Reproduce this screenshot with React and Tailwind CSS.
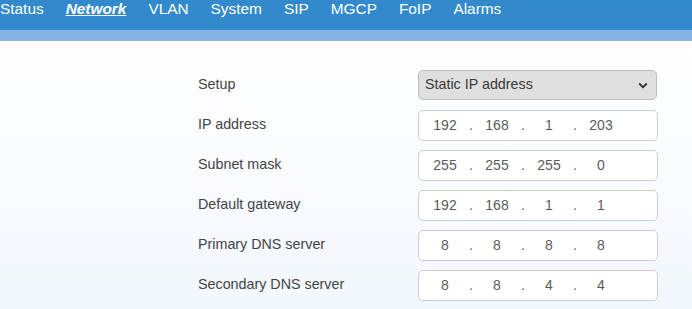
const tabs = ['Status', 'Network', 'VLAN', 'System', 'SIP', 'MGCP', 'FoIP', 'Alarms'];

const rows = [
  { label: 'IP address', octets: ['192', '168', '1', '203'] },
  { label: 'Subnet mask', octets: ['255', '255', '255', '0'] },
  { label: 'Default gateway', octets: ['192', '168', '1', '1'] },
  { label: 'Primary DNS server', octets: ['8', '8', '8', '8'] },
  { label: 'Secondary DNS server', octets: ['8', '8', '4', '4'] },
];

const IpInput = ({ octets }) => (
  <div className="flex h-[31px] w-[240px] items-center rounded-[5px] border border-[#cccccc] bg-white pl-[6px] text-[14px] text-[#5a5a5a]">
    {octets.map((o, i) => (
      <div key={i} className="flex items-center">
        {i > 0 && <span className="w-[12px] text-center">.</span>}
        <span className="w-[40px] text-center">{o}</span>
      </div>
    ))}
  </div>
);

export default function App() {
  return (
    <div className="min-h-[309px] font-['Liberation_Sans',Arial,sans-serif]">
      <nav className="flex h-[30px] gap-[22px] bg-[#3289cb] text-[15.4px] leading-[18px] text-white">
        {tabs.map((t) => (
          <span
            key={t}
            className={t === 'Network' ? 'font-bold italic underline' : ''}
          >
            {t}
          </span>
        ))}
      </nav>
      <div className="h-[11px] bg-[#85b4e5]" />
      <div className="min-h-[268px] bg-gradient-to-b from-white to-[#f2f7fd] pl-[198px] pt-[24px]">
        <div className="flex h-[40px] items-center">
          <label className="w-[220px] text-[14.3px] text-[#444444]">Setup</label>
          <div className="flex h-[30px] w-[239px] items-center justify-between rounded-[5px] border border-[#bdbdbd] bg-[#dfdfdf] pl-[6px] pr-[8px] text-[14.3px] text-[#3a3a3a]">
            <span>Static IP address</span>
            <svg width="10" height="7" viewBox="0 0 10 7" fill="none">
              <path d="M1.2 1.5 L5 5.2 L8.8 1.5" stroke="#333" strokeWidth="1.9" />
            </svg>
          </div>
        </div>
        {rows.map((r) => (
          <div key={r.label} className="flex h-[40px] items-center">
            <label className="w-[220px] text-[14.3px] text-[#444444]">{r.label}</label>
            <IpInput octets={r.octets} />
          </div>
        ))}
      </div>
    </div>
  );
}
